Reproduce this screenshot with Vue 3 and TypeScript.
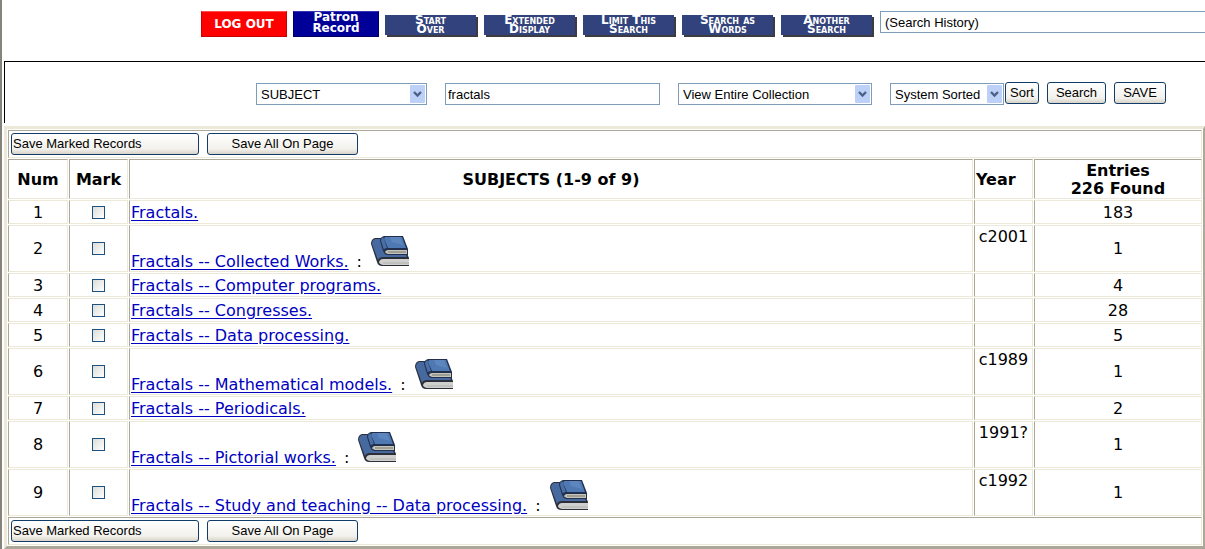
<script setup lang="ts">
import { ref } from 'vue'

interface Entry {
  num: number
  subject: string
  year?: string
  count: number
}

const entries: Entry[] = [
  { num: 1, subject: 'Fractals.', count: 183 },
  { num: 2, subject: 'Fractals -- Collected Works.', year: 'c2001', count: 1 },
  { num: 3, subject: 'Fractals -- Computer programs.', count: 4 },
  { num: 4, subject: 'Fractals -- Congresses.', count: 28 },
  { num: 5, subject: 'Fractals -- Data processing.', count: 5 },
  { num: 6, subject: 'Fractals -- Mathematical models.', year: 'c1989', count: 1 },
  { num: 7, subject: 'Fractals -- Periodicals.', count: 2 },
  { num: 8, subject: 'Fractals -- Pictorial works.', year: '1991?', count: 1 },
  { num: 9, subject: 'Fractals -- Study and teaching -- Data processing.', year: 'c1992', count: 1 },
]

const actions: [string, string][] = [
  ['Start', 'Over'],
  ['Extended', 'Display'],
  ['Limit This', 'Search'],
  ['Search as', 'Words'],
  ['Another', 'Search'],
]

const query = ref('fractals')
const marked = ref<number[]>([])
</script>

<template>
  <div class="page">
    <nav class="nav">
      <a href="#" class="tile logout">LOG OUT</a>
      <a href="#" class="tile patron">Patron<br />Record</a>
      <a v-for="a in actions" :key="a[0]" href="#" class="action">{{ a[0] }}<br />{{ a[1] }}</a>
      <select class="field history" aria-label="Search history">
        <option>(Search History)</option>
      </select>
    </nav>

    <form class="search" @submit.prevent>
      <span class="drop index">
        <select class="field" aria-label="Index"><option>SUBJECT</option></select>
        <svg class="arrow" viewBox="0 0 15 18"><rect width="15" height="18" rx="1" /><path d="M4 7l3.5 3.5L11 7" /></svg>
      </span>
      <input v-model="query" class="field query" type="text" aria-label="Search terms" />
      <span class="drop scope">
        <select class="field" aria-label="Collection"><option>View Entire Collection</option></select>
        <svg class="arrow" viewBox="0 0 15 18"><rect width="15" height="18" rx="1" /><path d="M4 7l3.5 3.5L11 7" /></svg>
      </span>
      <span class="sorting">
        <span class="drop order">
          <select class="field" aria-label="Sort order"><option>System Sorted</option></select>
          <svg class="arrow" viewBox="0 0 15 18"><rect width="15" height="18" rx="1" /><path d="M4 7l3.5 3.5L11 7" /></svg>
        </span>
        <button type="button" class="btn sort">Sort</button>
        <button type="submit" class="btn find">Search</button>
        <button type="button" class="btn keep">SAVE</button>
      </span>
    </form>

    <table class="results">
      <colgroup>
        <col class="c-num" /><col class="c-mark" /><col /><col class="c-year" /><col class="c-count" />
      </colgroup>
      <thead>
        <tr class="tools">
          <td colspan="5">
            <div class="bar">
              <button type="button" class="btn marked">Save Marked Records</button>
              <button type="button" class="btn all">Save All On Page</button>
            </div>
          </td>
        </tr>
        <tr class="head">
          <th scope="col">Num</th>
          <th scope="col">Mark</th>
          <th scope="col">SUBJECTS (1-9 of 9)</th>
          <th scope="col" class="left">Year</th>
          <th scope="col">Entries<br />226 Found</th>
        </tr>
      </thead>
      <tbody>
        <tr v-for="e in entries" :key="e.num" :class="{ tall: e.year }">
          <td>{{ e.num }}</td>
          <td class="mark">
            <input v-model="marked" class="check" type="checkbox" :value="e.num" :aria-label="'Mark ' + e.subject" />
          </td>
          <td class="subject">
            <a href="#">{{ e.subject }}</a>
            <template v-if="e.year">
              <span class="colon">:</span>
              <svg class="book" viewBox="0 0 40 32" aria-hidden="true">
                <path d="M5 3Q1 4 1 9L7 27Q8 31 12 31H39V23L36 16L13 3Z" fill="#2b2f3a" />
                <path d="M5 4Q2 5 2 9L8 25Q9 22 13 22H37L35 17L11 4Z" fill="#46699f" />
                <path d="M13 24H39V30H13Q9 29 9 27Q10 24 13 24Z" fill="#cfcfcd" />
                <path d="M13 28H39" stroke="#b0b0ae" stroke-width="1" />
                <path d="M14 1H33L38 14V20H17Q14 19 13 16L10 6Q10 2 14 1Z" fill="#22304e" />
                <path d="M13 2Q11 3 11 6L14 15Q14 13 17 13L14 4Z" fill="#4a6fa6" />
                <path d="M15 2H32L36 13H18L14 4Z" fill="#4f79b3" />
                <path d="M20 2H30L33 10L22 7Z" fill="#5d86be" />
                <path d="M18 15H37V19H18Q15 18 15 17Q16 15 18 15Z" fill="#c6c5bb" />
                <path d="M18 17H36" stroke="#77786f" stroke-width="1" />
              </svg>
            </template>
          </td>
          <td class="year">{{ e.year }}</td>
          <td>{{ e.count }}</td>
        </tr>
      </tbody>
      <tfoot>
        <tr class="tools">
          <td colspan="5">
            <div class="bar">
              <button type="button" class="btn marked">Save Marked Records</button>
              <button type="button" class="btn all">Save All On Page</button>
            </div>
          </td>
        </tr>
      </tfoot>
    </table>
  </div>
</template>

<style>
body {
  background: #fff;
  overflow: hidden;
}
</style>

<style scoped>
.page {
  box-sizing: border-box;
  min-height: 100vh;
  padding-left: 2px;
  border-left: 2px solid #85837a;
  font: 16px/18px Verdana, "DejaVu Sans", sans-serif;
  color: #000;
}

.nav {
  display: flex;
  gap: 6px;
  height: 50px;
  padding: 11px 0 0 197px;
  overflow: hidden;
}
.nav a {
  flex: none;
  box-sizing: border-box;
  color: #fff;
  font-weight: bold;
  text-align: center;
  text-decoration: none;
}
.tile {
  width: 86px;
  height: 26px;
  font-size: 12px;
}
.logout {
  background: #fe0000;
  border: 1px solid #c80000;
  border-top-color: #ff5050;
  line-height: 24px;
}
.patron {
  background: #000098;
  border: 1px solid #000060;
  border-top-color: #3434b4;
  line-height: 11px;
}
.action {
  width: 91px;
  height: 20px;
  margin: 4px 2px 0 0;
  padding-top: 1px;
  background: #32427c;
  box-shadow: 2px 2px 0 #3c3c40;
  font-size: 12px;
  line-height: 9px;
  font-variant: small-caps;
}

.field {
  box-sizing: border-box;
  height: 22px;
  margin: 0;
  padding: 0 4px;
  border: 1px solid #7f9db9;
  border-radius: 0;
  background: #fff;
  color: #000;
  font: 13px "Liberation Sans", Arial, sans-serif;
  appearance: none;
}
.history {
  flex: 1 0 330px;
}

.search {
  display: flex;
  gap: 18px;
  height: 62px;
  box-sizing: border-box;
  margin-bottom: 3px;
  padding: 21px 0 0 251px;
  border-top: 1px solid #000;
  border-left: 1px solid #000;
}
.drop {
  position: relative;
  flex: none;
  height: 22px;
}
.drop .field {
  width: 100%;
}
.index { width: 171px; }
.query { width: 215px; padding: 0 2px; }
.scope { width: 194px; }
.order { width: 114px; }
.arrow {
  position: absolute;
  top: 2px;
  right: 2px;
  width: 15px;
  height: 18px;
  pointer-events: none;
}
.arrow rect { fill: #bdd0f8; }
.arrow path { fill: none; stroke: #4d6185; stroke-width: 2.4; }
.sorting {
  display: flex;
  gap: 8px;
}
.btn {
  box-sizing: border-box;
  height: 22px;
  margin: 0;
  padding: 0;
  border: 1px solid #123c68;
  border-radius: 3px;
  background: linear-gradient(#fff, #f2f1ec 75%, #d8d3c9);
  color: #000;
  font: 13px/18px "Liberation Sans", Arial, sans-serif;
  white-space: nowrap;
}
.sorting .btn { margin-top: -1px; }
.sorting .sort { width: 34px; margin-left: -7px; }
.find { width: 59px; }
.keep { width: 52px; }
.marked { width: 188px; padding-left: 1px; text-align: left; }
.all { width: 151px; }

.results {
  width: 100%;
  table-layout: fixed;
  border: 3px solid #ece9d8;
  border-right: 2px solid #aca899;
  border-bottom: 3px solid #aca899;
  border-collapse: separate;
  border-spacing: 1px;
}
.c-num { width: 60px; }
.c-mark { width: 59px; }
.c-year { width: 59px; }
.c-count { width: 168px; }
.results td,
.results th {
  box-sizing: border-box;
  height: 24px;
  padding: 1px 1px 0;
  border: 1px solid #ece9d8;
  border-left-color: #aca899;
  text-align: center;
  vertical-align: middle;
}
.results .tools td {
  height: 28px;
  padding-top: 0;
  border-top-color: #aca899;
}
.results .head th {
  height: 40px;
  border-top-color: #aca899;
}
.results .tall td { height: 47px; }
.results .mark { padding-top: 0; }
.results .left { text-align: left; }
.results .subject {
  padding: 0 1px 1px;
  text-align: left;
  vertical-align: bottom;
  white-space: nowrap;
}
.results .tall .year {
  padding-top: 2px;
  vertical-align: top;
}
.subject a {
  color: #0000c0;
  text-underline-offset: 2px;
}
.tall .subject { line-height: 16px; }
.colon { margin: 0 8px; }
.book {
  width: 40px;
  height: 32px;
  vertical-align: baseline;
}
.bar {
  display: flex;
  gap: 8px;
  padding-left: 1px;
}
.check {
  display: block;
  box-sizing: border-box;
  width: 13px;
  height: 13px;
  margin: 0 auto;
  border: 1px solid #1c5180;
  background: linear-gradient(135deg, #dcdcd7, #fff);
  appearance: none;
}
.check:checked { background: #1c5180; }
</style>
